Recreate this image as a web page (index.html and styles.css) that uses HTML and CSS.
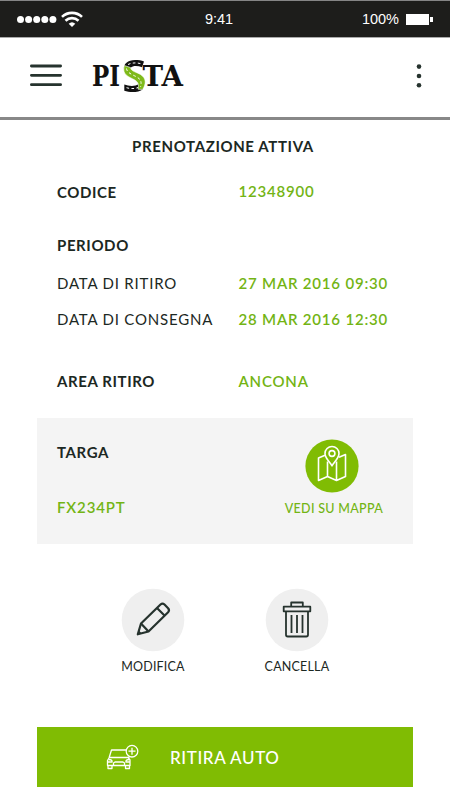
FILE: index.html
```html
<!DOCTYPE html>
<html lang="it">
<head>
    <meta charset="UTF-8">
    <meta name="viewport" content="width=device-width, initial-scale=1.0">
    <title>Pista - Prenotazione attiva</title>
    <link rel="stylesheet" href="styles.css">
</head>
<body>
    <div class="status-bar">
        <div class="signal">
            <svg width="67" height="18" viewBox="0 0 67 18">
                <g fill="#fff">
                    <circle cx="3.5" cy="9.5" r="3.5"/>
                    <circle cx="11.6" cy="9.5" r="3.5"/>
                    <circle cx="19.7" cy="9.5" r="3.5"/>
                    <circle cx="27.8" cy="9.5" r="3.5"/>
                    <circle cx="35.9" cy="9.5" r="3.5"/>
                    <path d="M55 17l-3.3-3.2a4.8 4.8 0 0 1 6.6 0z"/>
                </g>
                <path d="M45 6.9a14.4 14.4 0 0 1 20 0M48.5 10.7a9.4 9.4 0 0 1 13 0" fill="none" stroke="#fff" stroke-width="2.6"/>
            </svg>
        </div>
        <span class="time">9:41</span>
        <div class="power">
            <span>100%</span>
            <svg width="27" height="11" viewBox="0 0 27 11" fill="#fff">
                <rect width="23" height="11"/>
                <rect x="24" y="3" width="3" height="5"/>
            </svg>
        </div>
    </div>

    <header class="header">
        <svg class="menu" width="32" height="23" viewBox="0 0 32 23" stroke="#26332e" stroke-width="2.8" stroke-linecap="round">
            <path d="M1.4 2h29.2M1.4 11.3h29.2M1.4 20.7h29.2"/>
        </svg>
        <svg class="logo" width="92" height="34" viewBox="0 0 92 34">
            <g class="logo-text">
                <text x="0" y="27" textLength="28" lengthAdjust="spacingAndGlyphs">PI</text>
                <text x="50.5" y="27" textLength="40.5" lengthAdjust="spacingAndGlyphs">TA</text>
            </g>
            <path d="M32 10.5C31 5 36 1 43 1c3.500 0 6.500.4 9 1.500L50 8.300c-4-1.500-9-2-11.500.7z" fill="#111"/>
            <path d="M32.300 25.500c5 1.800 10.500 2.300 15-.8l3.700 5.500c-4.500 3.500-13 3.400-18.700 1.600z" fill="#111"/>
            <path d="M32.300 6.500c-1.800 7 1 9.500 6.200 12.300c5 2.600 9.500 4 7.500 11.400l4.700.3c3.800-6 3.500-11.500-2.200-15c-4-2.500-9.500-3-10-7z" fill="#7fba1a" stroke="#fff" stroke-width="0.6"/>
            <g fill="none" stroke="#fff" stroke-width="1" stroke-dasharray="2.6 2.4">
                <path d="M34.500 9.500c.5 4 4.500 5.500 8 7.300c4.500 2.200 8 4 6 11.200"/>
                <path d="M36 5.500c4-2 9-2 13.500-.6M34.500 28.700c4 1.200 8 1.200 11.500-.2"/>
            </g>
        </svg>
        <svg class="more" width="6" height="24" viewBox="0 0 6 24" fill="#26332e">
            <circle cx="3" cy="2.6" r="2.3"/>
            <circle cx="3" cy="12" r="2.3"/>
            <circle cx="3" cy="21.3" r="2.3"/>
        </svg>
    </header>

    <main>
        <h1>PRENOTAZIONE ATTIVA</h1>

        <dl class="details">
            <div class="row code">
                <dt>CODICE</dt>
                <dd>12348900</dd>
            </div>
            <div class="row period">
                <dt>PERIODO</dt>
            </div>
            <div class="row date">
                <dt>DATA DI RITIRO</dt>
                <dd>27 MAR 2016 09:30</dd>
            </div>
            <div class="row date">
                <dt>DATA DI CONSEGNA</dt>
                <dd>28 MAR 2016 12:30</dd>
            </div>
            <div class="row area">
                <dt>AREA RITIRO</dt>
                <dd>ANCONA</dd>
            </div>
        </dl>

        <section class="plate">
            <div class="plate-info">
                <h2>TARGA</h2>
                <span class="plate-number">FX234PT</span>
            </div>
            <a class="map-link">
                <svg width="54" height="54" viewBox="0 0 54 54">
                    <circle cx="27" cy="27" r="26.6" fill="#80bc03"/>
                    <g fill="none" stroke="#fff" stroke-width="1.6" stroke-linejoin="round">
                        <path d="M20 16.200L13.500 19v22.500l9-4l9 4l9-4V15.500l-6.500 2.800M22.500 22.500v15M31.500 22.500v19"/>
                        <path d="M27 26.800c-2-3.500-7-7.500-7-12.300a7 7 0 0 1 14 0c0 4.800-5 8.800-7 12.300z"/>
                        <circle cx="27" cy="14.5" r="2.9"/>
                    </g>
                </svg>
                <span>VEDI SU MAPPA</span>
            </a>
        </section>

        <div class="actions">
            <button class="action">
                <svg width="64" height="64" viewBox="0 0 64 64">
                    <circle cx="32" cy="32" r="31.3" fill="#efefef"/>
                    <g fill="none" stroke="#26332e" stroke-width="2.2" stroke-linejoin="round">
                        <path d="M16.800 46.300l3.200-10.800L39.500 16.500q2-1.800 4 0l3.600 3.700q1.800 2 0 4L27.500 43.500z"/>
                        <path d="M20 35.500l7.500 8M36 20l7.500 7.500"/>
                    </g>
                    <path d="M16.500 46.500l1.300-4.300l2.900 3.200z" fill="#26332e"/>
                </svg>
                <span>MODIFICA</span>
            </button>
            <button class="action">
                <svg width="64" height="64" viewBox="0 0 64 64">
                    <circle cx="32" cy="32" r="31.3" fill="#efefef"/>
                    <g fill="none" stroke="#26332e" stroke-width="1.8" stroke-linejoin="round">
                        <path d="M26.200 18.500v-4h11.600v4M18.700 18.700h26.600v4.600H18.700zM21 23.300v23.500q0 1.700 1.700 1.700h18.600q1.700 0 1.700-1.700V23.300"/>
                        <path d="M26.500 27v18M32 27v18M37.500 27v18"/>
                    </g>
                </svg>
                <span>CANCELLA</span>
            </button>
        </div>

        <button class="pickup">
            <svg width="34" height="26" viewBox="0 0 34 26" fill="none" stroke="#fff" stroke-width="1.3" stroke-linejoin="round">
                <path d="M20 6H5.500L3 14M3.500 13.500h20M22 12.500l1 2.500M3 14l-1.500 2.500v5h22.500v-5.500l-1.500-2"/>
                <path d="M2 21.500v3h4v-3M19.500 21.500v3h4v-3M7.500 21v-2l1.500-1h8l1.500 1v2M2.500 15.500q4 0 3.500 2.500H2M23.500 15.500q-4 0-3.500 2.500h4"/>
                <circle cx="26" cy="7.2" r="5.8"/>
                <path d="M26 3.700v7M22.500 7.200h7"/>
            </svg>
            <span>RITIRA AUTO</span>
        </button>
    </main>
</body>
</html>
```
FILE: styles.css
```css
* {
    box-sizing: border-box;
}
body {
    margin: 0;
    width: 450px;
    height: 800px;
    overflow: hidden;
    background-color: #ffffff;
    font-family: Lato, sans-serif;
    font-size: 15px;
    line-height: 20px;
    color: #1c2823;
}
svg {
    display: block;
}
button {
    border: none;
    padding: 0;
    background: none;
    font-family: inherit;
    color: inherit;
    cursor: pointer;
}
.status-bar {
    display: grid;
    grid-template-columns: 1fr auto 1fr;
    align-items: center;
    height: 38px;
    padding: 0 17px;
    background-color: #1d1d1b;
    border-top: 1px solid #858585;
    border-bottom: 1px solid #aaaaaa;
    font-family: "Liberation Sans", sans-serif;
    font-size: 14.5px;
    color: #ffffff;
}
.time {
    position: relative;
    left: -6px;
}
.power {
    display: flex;
    justify-content: flex-end;
    align-items: center;
    gap: 7px;
}
.header {
    display: flex;
    align-items: center;
    height: 82px;
    padding: 0 28px 4px 30px;
    border-bottom: 3px solid #888888;
}
.logo {
    margin-left: 30px;
}
.logo-text {
    font-family: "DejaVu Serif", serif;
    font-size: 28px;
    font-weight: bold;
    fill: #111111;
}
.more {
    margin-left: auto;
}
h1, h2 {
    margin: 0;
    font-size: 15px;
    font-weight: 700;
    letter-spacing: 0.62px;
}
h1 {
    margin-top: 16px;
    padding-right: 4px;
    text-align: center;
}
.details {
    margin: 26px 37px 0 57px;
}
.row {
    display: grid;
    grid-template-columns: 181.5px 1fr;
    height: 20px;
}
dt {
    font-weight: 700;
    letter-spacing: 0.6px;
}
dd {
    margin: 0;
    font-weight: 600;
    letter-spacing: 0.8px;
    color: #73b414;
}
.code dd {
    margin-top: -1px;
}
.period {
    margin-top: 33px;
}
.date {
    margin-top: 17px;
}
.period + .date {
    margin-top: 18px;
}
.date + .date {
    margin-top: 16px;
}
.date dt {
    font-weight: 400;
    letter-spacing: 0.8px;
}
.area {
    margin-top: 42px;
}
.plate {
    display: flex;
    justify-content: space-between;
    width: 376px;
    height: 126px;
    margin: 27px 0 0 37px;
    padding: 21px 30px 0 20px;
    background-color: #f4f4f4;
}
.plate-info {
    display: flex;
    flex-direction: column;
    gap: 35px;
    padding-top: 3px;
}
.plate-number {
    font-weight: 600;
    letter-spacing: 0.85px;
    color: #73b414;
}
.map-link {
    display: flex;
    flex-direction: column;
    gap: 6px;
    font-size: 12.5px;
    font-weight: 500;
    letter-spacing: 0.3px;
    color: #73b414;
}
.map-link svg {
    margin-left: 20px;
}
.actions {
    display: flex;
    gap: 64px;
    margin: 44px 0 0 113px;
}
.action {
    display: flex;
    flex-direction: column;
    align-items: center;
    gap: 5px;
    width: 80px;
    font-size: 12.5px;
    line-height: 20px;
    letter-spacing: 0.2px;
}
.pickup {
    display: flex;
    align-items: center;
    width: 376px;
    height: 60px;
    margin: 50px 0 0 37px;
    padding-left: 69px;
    background-color: #80bc03;
    font-size: 17px;
    font-weight: 500;
    letter-spacing: 0.6px;
    color: #ffffff;
}
.pickup span {
    margin-left: 30px;
}
```
